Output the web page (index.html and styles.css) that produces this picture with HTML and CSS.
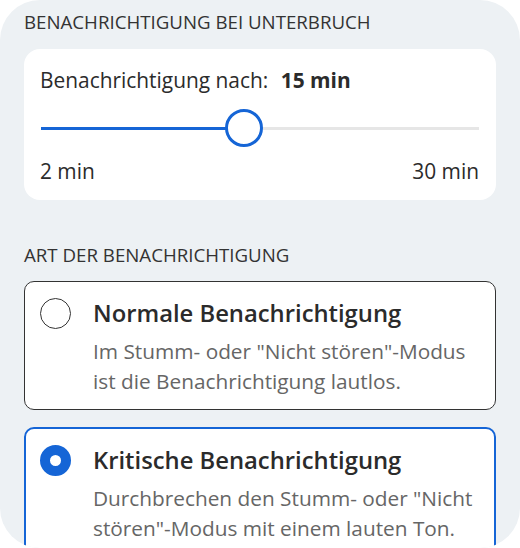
FILE: index.html
```html
<!DOCTYPE html>
<html lang="de">
<head>
<meta charset="UTF-8">
<meta name="viewport" content="width=device-width, initial-scale=1.0">
<title>Benachrichtigungen</title>
<link rel="stylesheet" href="styles.css">
</head>
<body>
<div class="screen">
  <h3 class="section-title">Benachrichtigung bei Unterbruch</h3>
  <div class="card slider-card">
    <p class="slider-label">Benachrichtigung nach: <strong>15 min</strong></p>
    <div class="slider">
      <div class="track"></div>
      <div class="track-fill" style="width: 46.43%"></div>
      <div class="thumb" style="left: 46.43%"></div>
    </div>
    <div class="slider-range">
      <span>2 min</span>
      <span>30 min</span>
    </div>
  </div>

  <h3 class="section-title second">Art der Benachrichtigung</h3>

  <label class="option">
    <input type="radio" name="art" value="normal">
    <span class="radio"></span>
    <span class="option-text">
      <span class="option-title">Normale Benachrichtigung</span>
      <span class="option-desc">Im Stumm- oder "Nicht stören"-Modus ist die Benachrichtigung lautlos.</span>
    </span>
  </label>

  <label class="option selected">
    <input type="radio" name="art" value="kritisch" checked>
    <span class="radio"></span>
    <span class="option-text">
      <span class="option-title">Kritische Benachrichtigung</span>
      <span class="option-desc">Durchbrechen den Stumm- oder "Nicht stören"-Modus mit einem lauten Ton.</span>
    </span>
  </label>
</div>
</body>
</html>
```

FILE: styles.css
```css
body {
  margin: 0;
  padding: 0;
  background-color: #fff;
  font-family: "Open Sans", "Noto Sans", sans-serif;
  color: #2b2b2b;
}
.screen {
  width: 520px;
  height: 548px;
  box-sizing: border-box;
  padding: 10px 24px 0;
  background-color: #edf1f4;
  border-radius: 40px;
  overflow: hidden;
}
.section-title {
  margin: 0 0 15px;
  font-size: 18.7px;
  font-weight: 400;
  line-height: 24px;
  text-transform: uppercase;
  color: #333;
}
.section-title.second {
  margin-top: 43px;
  margin-bottom: 14px;
}
.card {
  background-color: #fff;
  border-radius: 16px;
}
.slider-card {
  padding: 17px 17px 16px 16px;
}
.slider-label {
  margin: 0;
  font-size: 20.9px;
  line-height: 28px;
}
.slider-label strong {
  margin-left: 7px;
  font-weight: 700;
}
.slider {
  position: relative;
  height: 38px;
  margin: 15px 0 0 1px;
}
.track, .track-fill {
  position: absolute;
  left: 0;
  top: 18px;
  height: 3px;
}
.track {
  right: 0;
  background-color: #e6e6e6;
}
.track-fill {
  background-color: #1565d6;
}
.thumb {
  position: absolute;
  top: 0;
  width: 32px;
  height: 32px;
  margin-left: -19px;
  border: 3px solid #1565d6;
  border-radius: 50%;
  background-color: #fff;
}
.slider-range {
  display: flex;
  justify-content: space-between;
  margin-top: 11px;
  font-size: 20.9px;
  line-height: 26px;
}
.option {
  display: flex;
  align-items: flex-start;
  gap: 22px;
  margin-bottom: 17px;
  padding: 15px 16px 13px 15px;
  background-color: #fff;
  border: 1.5px solid #333;
  border-radius: 10px;
  cursor: pointer;
}
.option.selected {
  border: 2px solid #1565d6;
  padding: 15px 15px 13px 14px;
}
.option input {
  display: none;
}
.radio {
  flex: none;
  box-sizing: border-box;
  width: 31px;
  height: 31px;
  margin-top: 1px;
  border: 1.5px solid #333;
  border-radius: 50%;
}
.option.selected .radio {
  border: 10.5px solid #1565d6;
  background-color: #fff;
}
.option-text {
  display: flex;
  flex-direction: column;
}
.option-title {
  font-size: 23.8px;
  font-weight: 600;
  line-height: 32px;
}
.option-desc {
  margin-top: 7px;
  font-size: 20.8px;
  line-height: 30px;
  color: #666;
}
```
